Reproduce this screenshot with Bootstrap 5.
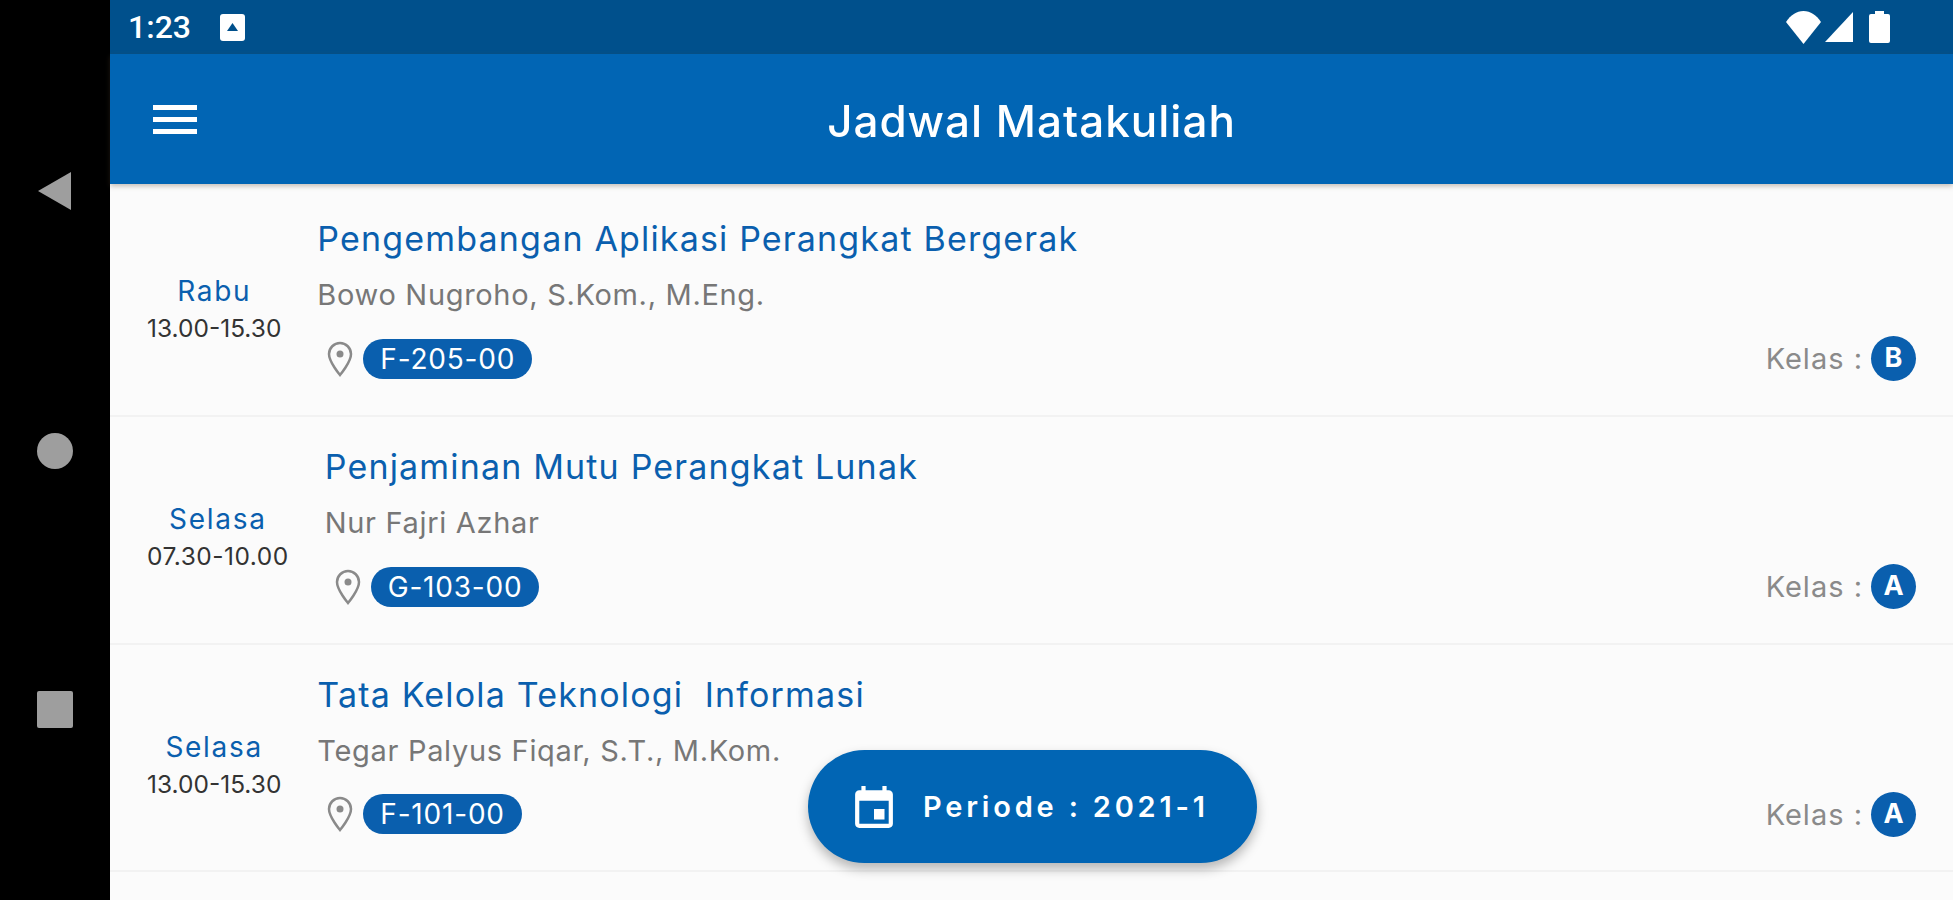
<!DOCTYPE html>
<html lang="en">
  <head>
    <meta charset="UTF-8" />
    <title>Jadwal Matakuliah</title>
    <link rel="stylesheet" href="https://cdn.jsdelivr.net/npm/bootstrap@5.3.0/dist/css/bootstrap.min.css" />
    <style>
      html, body { height: 100%; overflow: hidden; background: #000; }
      .app-shell { height: 900px; font-family: Inter, "Noto Sans", sans-serif; filter: blur(.7px); }
      .nav-rail { width: 110px; background: #000; padding-top: 171px; gap: 222px; }
      .app-main { background: #fbfbfb; }
      .status-strip { height: 54px; background: #00508c; padding: 0 63px 0 18px; color: #fff; }
      .status-time { font-family: Roboto, sans-serif; font-weight: 500; font-size: 32px; width: 92px; }
      .tool-strip { height: 130px; background: #0165b4; box-shadow: 0 2px 5px rgba(90, 70, 50, .35); grid-template-columns: 1fr auto 1fr; }
      .tool-title { font-size: 44px; font-weight: 500; letter-spacing: 1px; color: #fff; margin-top: 4px; }
      .burger-wrap { margin-left: 43px; gap: 7px; width: 44px; }
      .burger-bar { height: 5px; background: #fff; }
      .class-row { height: 227.5px; padding: 30px 37px 0; border-bottom: 2px solid #f2f2f2; }
      .class-row.first-row { height: 233px; padding-top: 35px; }
      .day-col { padding-top: 58px; margin-right: 36px; line-height: 1; }
      .day-name { font-size: 28px; letter-spacing: 1.700px; color: #0a5fae; margin-bottom: 11px; }
      .day-time { font-size: 24.500px; color: #333; }
      .day-time.wide-time { letter-spacing: .5px; }
      .course-title { font-size: 34px; letter-spacing: 1.170px; color: #0a5fae; line-height: 40px; }
      .course-teacher { font-size: 29px; letter-spacing: .68px; color: #777; line-height: 36px; margin-top: 18px; }
      .room-line { margin-top: 23px; }
      .room-pin { margin-left: 10px; margin-right: 10px; }
      .room-tag { height: 40px; line-height: 40px; padding: 0 17px; background: #0a5fae; color: #fff; font-size: 28px; letter-spacing: .8px; }
      .kelas-text { font-size: 29px; letter-spacing: 1px; color: #8a8a8a; margin-right: 8px; margin-top: 1px; }
      .kelas-dot { width: 45px; height: 45px; background: #0a5fae; color: #fff; font-size: 27px; font-weight: 700; }
      .period-fab { left: 698px; top: 750px; width: 449px; height: 113px; background: #0165b4; color: #fff; box-shadow: 0 6px 12px rgba(0, 0, 0, .28); font-size: 29px; font-weight: 600; letter-spacing: 3.800px; padding-left: 47px; gap: 30px; }
    </style>
  </head>
  <body>
    <div class="app-shell d-flex position-relative">
      <div class="nav-rail d-flex flex-column align-items-center">
        <svg width="36" height="40" viewBox="0 0 36 40"><path d="M1 20 34 1v38z" fill="#9e9e9e" /></svg>
        <svg width="36" height="36" viewBox="0 0 36 36"><circle cx="18" cy="18" r="18" fill="#9e9e9e" /></svg>
        <svg width="36" height="37" viewBox="0 0 36 37"><rect width="36" height="37" rx="2" fill="#9e9e9e" /></svg>
      </div>
      <div class="app-main flex-grow-1 position-relative">
        <div class="status-strip d-flex align-items-center">
          <span class="status-time">1:23</span>
          <svg width="25" height="27" viewBox="0 0 25 27"><rect width="25" height="27" rx="3" fill="#fff" /><path d="M7 17l5.500-8 5.500 8z" fill="#00508c" /></svg>
          <div class="ms-auto d-flex align-items-center">
            <svg width="35" height="33" viewBox="0 0 37 33" preserveAspectRatio="none"><path d="M18.500 33 0 11C5 4 11 0 18.500 0S32 4 37 11z" fill="#fff" /></svg>
            <svg class="ms-1" width="28" height="30" viewBox="0 0 28 30"><path d="M28 0v30H0z" fill="#fff" /></svg>
            <svg class="ms-3" width="21" height="32" viewBox="0 0 21 32"><path d="M6 0h9v3h4a2 2 0 0 1 2 2v25a2 2 0 0 1-2 2H2a2 2 0 0 1-2-2V5a2 2 0 0 1 2-2h4z" fill="#fff" /></svg>
          </div>
        </div>
        <div class="tool-strip d-grid align-items-center position-relative">
          <div class="d-flex flex-column burger-wrap">
            <div class="burger-bar"></div>
            <div class="burger-bar"></div>
            <div class="burger-bar"></div>
          </div>
          <div class="tool-title">Jadwal Matakuliah</div>
        </div>

        <div class="class-row first-row d-flex">
          <div class="day-col text-center">
            <div class="day-name">Rabu</div>
            <div class="day-time">13.00-15.30</div>
          </div>
          <div class="flex-grow-1">
            <div class="course-title">Pengembangan Aplikasi Perangkat Bergerak</div>
            <div class="course-teacher">Bowo Nugroho, S.Kom., M.Eng.</div>
            <div class="room-line d-flex align-items-center">
              <svg class="room-pin" width="26" height="36" viewBox="0 0 26 36"><path d="M13 2C7 2 2 7 2 13c0 8 11 21 11 21s11-13 11-21c0-6-5-11-11-11z" fill="none" stroke="#8a8a8a" stroke-width="2.500" /><circle cx="13" cy="13" r="3.500" fill="#8a8a8a" /></svg>
              <span class="room-tag rounded-pill">F-205-00</span>
              <span class="kelas-text ms-auto">Kelas :</span>
              <span class="kelas-dot rounded-circle d-flex align-items-center justify-content-center">B</span>
            </div>
          </div>
        </div>

        <div class="class-row d-flex">
          <div class="day-col text-center">
            <div class="day-name">Selasa</div>
            <div class="day-time wide-time">07.30-10.00</div>
          </div>
          <div class="flex-grow-1">
            <div class="course-title">Penjaminan Mutu Perangkat Lunak</div>
            <div class="course-teacher">Nur Fajri Azhar</div>
            <div class="room-line d-flex align-items-center">
              <svg class="room-pin" width="26" height="36" viewBox="0 0 26 36"><path d="M13 2C7 2 2 7 2 13c0 8 11 21 11 21s11-13 11-21c0-6-5-11-11-11z" fill="none" stroke="#8a8a8a" stroke-width="2.500" /><circle cx="13" cy="13" r="3.500" fill="#8a8a8a" /></svg>
              <span class="room-tag rounded-pill">G-103-00</span>
              <span class="kelas-text ms-auto">Kelas :</span>
              <span class="kelas-dot rounded-circle d-flex align-items-center justify-content-center">A</span>
            </div>
          </div>
        </div>

        <div class="class-row d-flex">
          <div class="day-col text-center">
            <div class="day-name">Selasa</div>
            <div class="day-time">13.00-15.30</div>
          </div>
          <div class="flex-grow-1">
            <div class="course-title">Tata Kelola Teknologi&nbsp; Informasi</div>
            <div class="course-teacher">Tegar Palyus Fiqar, S.T., M.Kom.</div>
            <div class="room-line d-flex align-items-center">
              <svg class="room-pin" width="26" height="36" viewBox="0 0 26 36"><path d="M13 2C7 2 2 7 2 13c0 8 11 21 11 21s11-13 11-21c0-6-5-11-11-11z" fill="none" stroke="#8a8a8a" stroke-width="2.500" /><circle cx="13" cy="13" r="3.500" fill="#8a8a8a" /></svg>
              <span class="room-tag rounded-pill">F-101-00</span>
              <span class="kelas-text ms-auto">Kelas :</span>
              <span class="kelas-dot rounded-circle d-flex align-items-center justify-content-center">A</span>
            </div>
          </div>
        </div>

        <div class="period-fab position-absolute rounded-pill d-flex align-items-center">
          <svg width="38" height="42" viewBox="3 1 18 20"><path fill="#fff" d="M17 12h-5v5h5v-5zM16 1v2H8V1H6v2H5c-1.110 0-1.990.9-1.990 2L3 19c0 1.100.89 2 2 2h14c1.100 0 2-.9 2-2V5c0-1.100-.9-2-2-2h-1V1h-2zm3 18H5V8h14v11z" /></svg>
          <span>Periode : 2021-1</span>
        </div>
      </div>
    </div>
    <script src="https://cdn.jsdelivr.net/npm/bootstrap@5.3.0/dist/js/bootstrap.bundle.min.js"></script>
  </body>
</html>
